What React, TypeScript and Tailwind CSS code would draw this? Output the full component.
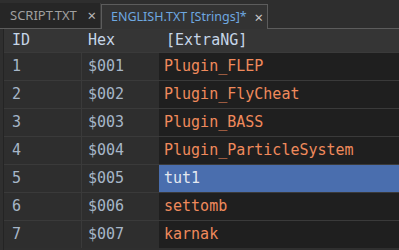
const rows = [
  { id: "1", hex: "$001", name: "Plugin_FLEP" },
  { id: "2", hex: "$002", name: "Plugin_FlyCheat" },
  { id: "3", hex: "$003", name: "Plugin_BASS" },
  { id: "4", hex: "$004", name: "Plugin_ParticleSystem" },
  { id: "5", hex: "$005", name: "tut1" },
  { id: "6", hex: "$006", name: "settomb" },
  { id: "7", hex: "$007", name: "karnak" },
];

const mono = { fontFamily: '"DejaVu Sans Mono", monospace' };

export default function App() {
  return (
    <div
      className="w-[399px] h-[250px] overflow-hidden bg-[#2f2f2f] flex flex-col"
      style={{ fontFamily: '"Noto Sans", sans-serif' }}
    >
      {/* tabs */}
      <div className="h-[29px] shrink-0 flex items-end border-b border-[#5c5c5c] bg-[#2e2e2e]">
        <div className="w-[101px] h-[25px] flex items-center justify-between pl-[10px] pr-[4px] bg-[#262626] border-r border-[#3c3c3c] text-[13px] text-[#a0a0a0]">
          <span>SCRIPT.TXT</span>
          <span className="text-[15px] leading-none text-[#b8b8b8]">×</span>
        </div>
        <div className="w-[167px] h-[25px] -mb-px flex items-center justify-between pl-[9px] pr-[4px] bg-[#333333] border border-b-0 border-[#5c5c5c] text-[12.5px] text-[#6ea8e0]">
          <span>ENGLISH.TXT [Strings]*</span>
          <span className="text-[15px] leading-none text-[#c8c8c8]">×</span>
        </div>
      </div>

      {/* grid */}
      <div className="flex-1 pl-[3px]" style={mono}>
        <div className="h-full border-l border-[#242424]">
          <div className="h-[23px] flex items-center bg-[#353535] text-[15px] text-[#c6d6e8]">
            <div className="w-[78px] pl-[8px]">ID</div>
            <div className="w-[77px] pl-[6px]">Hex</div>
            <div className="flex-1 pl-[7px]">[ExtraNG]</div>
          </div>
          {rows.map((r, i) => (
            <div
              key={r.id}
              className="h-[28px] flex border-t border-[#3a3a3a] text-[15px]"
            >
              <div className="w-[78px] pl-[8px] flex items-center bg-[#2e2e2e] border-r border-[#3a3a3a] text-[#a6b6c8]">
                {r.id}
              </div>
              <div className="w-[77px] pl-[6px] flex items-center bg-[#2e2e2e] text-[#a6b6c8]">
                {r.hex}
              </div>
              <div
                className={
                  i === 4
                    ? "flex-1 pl-[5px] flex items-center bg-[#4a6eae] text-[#e4e8f0]"
                    : "flex-1 pl-[5px] flex items-center bg-[#1f1f1f] text-[#f08a5c]"
                }
              >
                {r.name}
              </div>
            </div>
          ))}
        </div>
      </div>
    </div>
  );
}
